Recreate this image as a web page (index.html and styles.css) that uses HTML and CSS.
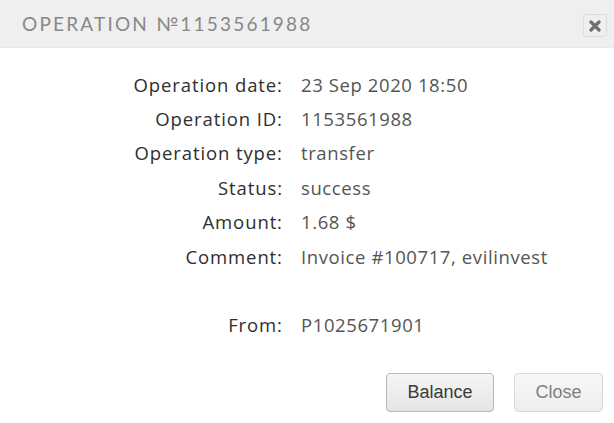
FILE: index.html
```html
<!DOCTYPE html>
<html lang="en">
<head>
	<meta charset="UTF-8">
	<title>Operation</title>
	<link rel="stylesheet" href="styles.css">
</head>
<body>
<div class="dialog">
	<div class="head">
		<span class="title">OPERATION №1153561988</span>
		<span class="x">
			<svg width="12" height="12" viewBox="0 0 12 12"><path d="M2 2 L10 10 M10 2 L2 10" stroke="#6e6e6e" stroke-width="3.2" stroke-linecap="round"/></svg>
		</span>
	</div>
	<div class="info">
		<div class="lbl">Operation date:</div><div class="val">23 Sep 2020 18:50</div>
		<div class="lbl">Operation ID:</div><div class="val">1153561988</div>
		<div class="lbl">Operation type:</div><div class="val">transfer</div>
		<div class="lbl">Status:</div><div class="val">success</div>
		<div class="lbl">Amount:</div><div class="val">1.68 $</div>
		<div class="lbl">Comment:</div><div class="val">Invoice #100717, evilinvest</div>
		<div class="lbl"></div><div class="val"></div>
		<div class="lbl">From:</div><div class="val">P1025671901</div>
	</div>
	<div class="btns">
		<button class="btn">Balance</button>
		<button class="btn off">Close</button>
	</div>
</div>
</body>
</html>
```
FILE: styles.css
```css
body{
	margin: 0;
	background: #fff;
}
.dialog{
	width: 614px;
}
.head{
	display: flex;
	align-items: center;
	justify-content: space-between;
	height: 48px;
	padding: 0 7px 0 22px;
	background: #efefef;
	border-bottom: 1px solid #e8e8e8;
	box-sizing: border-box;
}
.title{
	font-family: Lato, sans-serif;
	font-size: 19px;
	letter-spacing: 2.2px;
	color: #888;
}
.x{
	display: flex;
	align-items: center;
	justify-content: center;
	width: 22px;
	height: 21px;
	border: 1px solid #dcdcdc;
	border-radius: 3px;
	margin-top: 4px;
}
.info{
	display: grid;
	grid-template-columns: 282px 1fr;
	column-gap: 19px;
	grid-auto-rows: 34.4px;
	align-items: center;
	padding-top: 19px;
	font-family: "Open Sans", sans-serif;
	font-size: 18.5px;
	letter-spacing: 0.6px;
}
.lbl{
	text-align: right;
	color: #2e2e2e;
	letter-spacing: 0.9px;
	margin-right: -0.9px; /* trailing letter-spacing */
}
.val{
	color: #555;
}
.btns{
	display: flex;
	justify-content: flex-end;
	gap: 20px;
	padding: 31px 11px 0 0;
}
.btn{
	height: 39px;
	padding: 0;
	border: 1px solid #b8b8b8;
	border-radius: 4px;
	background: linear-gradient(#f6f6f6, #e4e4e4);
	font-family: "Liberation Sans", Arial, sans-serif;
	font-size: 18px;
	color: #3a3a3a;
	width: 108px;
}
.btn.off{
	width: 89px;
	border-color: #dadada;
	background: linear-gradient(#f8f8f8, #ededed);
	color: #808080;
}
```
